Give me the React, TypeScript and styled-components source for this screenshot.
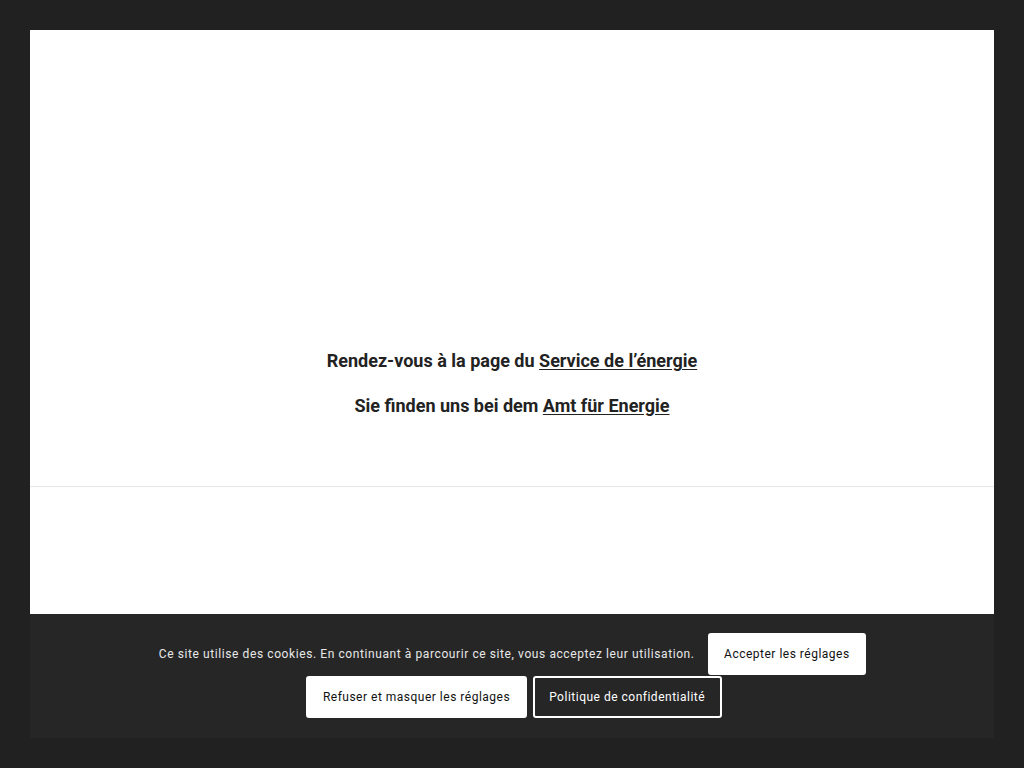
import * as React from "react";
import styled, { createGlobalStyle } from "styled-components";

const GlobalStyle = createGlobalStyle`
  html, body {
    margin: 0;
    padding: 0;
    background-color: #212121;
  }
  * {
    box-sizing: border-box;
  }
`;

const Frame = styled.div`
  height: 100vh;
  padding: 30px;
  display: flex;
  flex-direction: column;
  font-family: Roboto, "Liberation Sans", sans-serif;
`;

const Page = styled.div`
  flex: 1;
  background-color: #ffffff;
  display: flex;
  flex-direction: column;
`;

const Hero = styled.section`
  height: 457px;
  border-bottom: 1px solid #e6e6e6;
  display: flex;
  flex-direction: column;
  justify-content: flex-end;
  align-items: center;
  padding-bottom: 49px;
`;

const Lead = styled.p`
  margin: 0 0 18px;
  font-size: 18px;
  line-height: 27px;
  font-weight: 700;
  color: #222222;
  text-align: center;
`;

const LeadLink = styled.a`
  color: #222222;
  text-decoration: underline;
  text-underline-offset: 2px;
`;

const CookieBar = styled.div`
  height: 124px;
  background-color: #262626;
  padding: 19px 120px 0 124px;
  display: flex;
  flex-wrap: wrap;
  justify-content: center;
  align-content: flex-start;
  align-items: center;
  row-gap: 1px;
`;

const CookieText = styled.span`
  font-size: 12px;
  letter-spacing: 0.59px;
  color: #e8e8e8;
  margin-right: 10px;
`;

const CookieButton = styled.button<{ $outline?: boolean }>`
  height: 42px;
  margin: 0 3px;
  padding: 0 14.5px;
  border-radius: 3px;
  border: 2px solid #ffffff;
  background-color: ${(p) => (p.$outline ? "#262626" : "#ffffff")};
  color: ${(p) => (p.$outline ? "#ffffff" : "#111111")};
  font-family: Roboto, "Liberation Sans", sans-serif;
  font-size: 12px;
  letter-spacing: 0.5px;
  cursor: pointer;
`;

export default function App() {
  return (
    <>
      <GlobalStyle />
      <Frame>
        <Page>
          <Hero>
            <Lead>
              Rendez-vous à la page du <LeadLink href="#">Service de l’énergie</LeadLink>
            </Lead>
            <Lead>
              Sie finden uns bei dem <LeadLink href="#">Amt für Energie</LeadLink>
            </Lead>
          </Hero>
        </Page>
        <CookieBar>
          <CookieText>
            Ce site utilise des cookies. En continuant à parcourir ce site, vous acceptez leur utilisation.
          </CookieText>
          <CookieButton>Accepter les réglages</CookieButton>
          <CookieButton>Refuser et masquer les réglages</CookieButton>
          <CookieButton $outline>Politique de confidentialité</CookieButton>
        </CookieBar>
      </Frame>
    </>
  );
}
